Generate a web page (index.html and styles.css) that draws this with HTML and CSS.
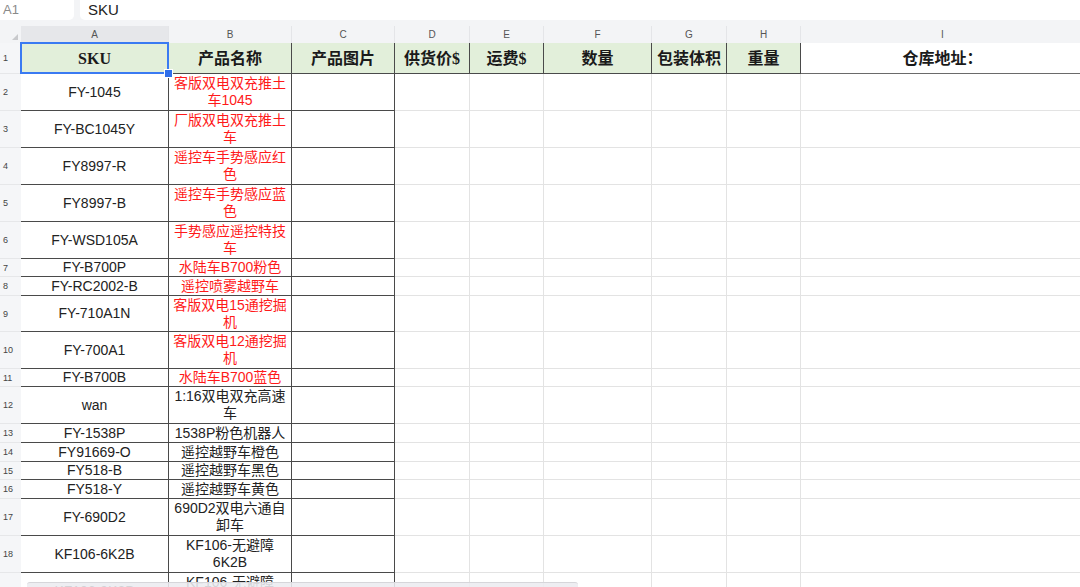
FILE: index.html
```html
<!DOCTYPE html>
<html lang="zh">
<head>
<meta charset="utf-8">
<title>Sheet</title>
<link rel="stylesheet" href="styles.css">
</head>
<body>
<div class="app">
  <div class="fbar">
    <div class="namebox">A1</div>
    <div class="formula">SKU</div>
  </div>
  <div class="sheet">
    <div class="corner"></div>
    <div class="ch sel-ch">A</div><div class="ch">B</div><div class="ch">C</div><div class="ch">D</div><div class="ch">E</div><div class="ch">F</div><div class="ch">G</div><div class="ch">H</div><div class="ch">I</div>

    <div class="rh">1</div>
    <div class="cell hd dk sel">SKU</div><div class="cell hd dk">产品名称</div><div class="cell hd dk">产品图片</div><div class="cell hd dk">供货价$</div><div class="cell hd dk">运费$</div><div class="cell hd dk">数量</div><div class="cell hd dk">包装体积</div><div class="cell hd dk">重量</div><div class="cell hd hd-i">仓库地址：</div>

    <div class="rh">2</div>
    <div class="cell dk">FY-1045</div><div class="cell dk red">客版双电双充推土<br>车1045</div><div class="cell dk"></div><div class="cell"></div><div class="cell"></div><div class="cell"></div><div class="cell"></div><div class="cell"></div><div class="cell"></div>

    <div class="rh">3</div>
    <div class="cell dk">FY-BC1045Y</div><div class="cell dk red">厂版双电双充推土<br>车</div><div class="cell dk"></div><div class="cell"></div><div class="cell"></div><div class="cell"></div><div class="cell"></div><div class="cell"></div><div class="cell"></div>

    <div class="rh">4</div>
    <div class="cell dk">FY8997-R</div><div class="cell dk red">遥控车手势感应红<br>色</div><div class="cell dk"></div><div class="cell"></div><div class="cell"></div><div class="cell"></div><div class="cell"></div><div class="cell"></div><div class="cell"></div>

    <div class="rh">5</div>
    <div class="cell dk">FY8997-B</div><div class="cell dk red">遥控车手势感应蓝<br>色</div><div class="cell dk"></div><div class="cell"></div><div class="cell"></div><div class="cell"></div><div class="cell"></div><div class="cell"></div><div class="cell"></div>

    <div class="rh">6</div>
    <div class="cell dk">FY-WSD105A</div><div class="cell dk red">手势感应遥控特技<br>车</div><div class="cell dk"></div><div class="cell"></div><div class="cell"></div><div class="cell"></div><div class="cell"></div><div class="cell"></div><div class="cell"></div>

    <div class="rh">7</div>
    <div class="cell dk">FY-B700P</div><div class="cell dk red">水陆车B700粉色</div><div class="cell dk"></div><div class="cell"></div><div class="cell"></div><div class="cell"></div><div class="cell"></div><div class="cell"></div><div class="cell"></div>

    <div class="rh">8</div>
    <div class="cell dk">FY-RC2002-B</div><div class="cell dk red">遥控喷雾越野车</div><div class="cell dk"></div><div class="cell"></div><div class="cell"></div><div class="cell"></div><div class="cell"></div><div class="cell"></div><div class="cell"></div>

    <div class="rh">9</div>
    <div class="cell dk">FY-710A1N</div><div class="cell dk red">客版双电15通挖掘<br>机</div><div class="cell dk"></div><div class="cell"></div><div class="cell"></div><div class="cell"></div><div class="cell"></div><div class="cell"></div><div class="cell"></div>

    <div class="rh">10</div>
    <div class="cell dk">FY-700A1</div><div class="cell dk red">客版双电12通挖掘<br>机</div><div class="cell dk"></div><div class="cell"></div><div class="cell"></div><div class="cell"></div><div class="cell"></div><div class="cell"></div><div class="cell"></div>

    <div class="rh">11</div>
    <div class="cell dk">FY-B700B</div><div class="cell dk red">水陆车B700蓝色</div><div class="cell dk"></div><div class="cell"></div><div class="cell"></div><div class="cell"></div><div class="cell"></div><div class="cell"></div><div class="cell"></div>

    <div class="rh">12</div>
    <div class="cell dk">wan</div><div class="cell dk">1:16双电双充高速<br>车</div><div class="cell dk"></div><div class="cell"></div><div class="cell"></div><div class="cell"></div><div class="cell"></div><div class="cell"></div><div class="cell"></div>

    <div class="rh">13</div>
    <div class="cell dk">FY-1538P</div><div class="cell dk">1538P粉色机器人</div><div class="cell dk"></div><div class="cell"></div><div class="cell"></div><div class="cell"></div><div class="cell"></div><div class="cell"></div><div class="cell"></div>

    <div class="rh">14</div>
    <div class="cell dk">FY91669-O</div><div class="cell dk">遥控越野车橙色</div><div class="cell dk"></div><div class="cell"></div><div class="cell"></div><div class="cell"></div><div class="cell"></div><div class="cell"></div><div class="cell"></div>

    <div class="rh">15</div>
    <div class="cell dk">FY518-B</div><div class="cell dk">遥控越野车黑色</div><div class="cell dk"></div><div class="cell"></div><div class="cell"></div><div class="cell"></div><div class="cell"></div><div class="cell"></div><div class="cell"></div>

    <div class="rh">16</div>
    <div class="cell dk">FY518-Y</div><div class="cell dk">遥控越野车黄色</div><div class="cell dk"></div><div class="cell"></div><div class="cell"></div><div class="cell"></div><div class="cell"></div><div class="cell"></div><div class="cell"></div>

    <div class="rh">17</div>
    <div class="cell dk">FY-690D2</div><div class="cell dk">690D2双电六通自<br>卸车</div><div class="cell dk"></div><div class="cell"></div><div class="cell"></div><div class="cell"></div><div class="cell"></div><div class="cell"></div><div class="cell"></div>

    <div class="rh">18</div>
    <div class="cell dk">KF106-6K2B</div><div class="cell dk">KF106-无避障<br>6K2B</div><div class="cell dk"></div><div class="cell"></div><div class="cell"></div><div class="cell"></div><div class="cell"></div><div class="cell"></div><div class="cell"></div>

    <div class="rh">19</div>
    <div class="cell dk">KF106-9K2B</div><div class="cell dk">KF106-无避障<br>9K2B</div><div class="cell dk"></div><div class="cell"></div><div class="cell"></div><div class="cell"></div><div class="cell"></div><div class="cell"></div><div class="cell"></div>
  </div>
  <div class="hscroll"></div>
</div>
</body>
</html>
```

FILE: styles.css
```css
* { box-sizing: border-box; }
html, body {
  margin: 0;
  padding: 0;
  width: 1080px;
  height: 587px;
  overflow: hidden;
  background: #ffffff;
}
.app {
  position: relative;
  width: 1080px;
  height: 587px;
  overflow: hidden;
  font-family: "Liberation Sans", "Noto Sans CJK SC", sans-serif;
  color: #222;
}
.fbar {
  display: flex;
  gap: 6px;
  height: 26px;
  padding-bottom: 6px;
  background: #f3f4f6;
}
.namebox {
  width: 74px;
  background: #fff;
  border-radius: 0 0 5px 0;
  font-size: 13px;
  color: #8a8a8a;
  line-height: 20px;
  padding-left: 3px;
}
.formula {
  flex: 1;
  background: #fff;
  border-radius: 0 0 0 5px;
  font-size: 15px;
  color: #222;
  line-height: 19px;
  padding-left: 8px;
}
.sheet {
  display: grid;
  grid-template-columns: 21px 148px 123px 103px 75px 74px 108px 75px 74px 284px;
  grid-template-rows: 17px 31px 37px 37px 37px 37px 37px 18px 19px 36px 37px 18px 37px 19px 19px 18px 19px 37px 37px 37px;
  width: 1105px;
}
.corner {
  position: relative;
  background: #f3f4f6;
}
.corner::after {
  content: "";
  position: absolute;
  right: 3px;
  bottom: 3px;
  width: 0;
  height: 0;
  border-left: 6px solid transparent;
  border-bottom: 6px solid #c8c9cc;
}
.ch {
  background: #f3f4f6;
  border-right: 1px solid #e4e5e8;
  font-size: 10px;
  color: #555;
  display: flex;
  align-items: center;
  justify-content: center;
}
.sel-ch {
  background: #e6e7ea;
}
.rh {
  background: #f5f6f8;
  border-bottom: 1px solid #e6e7e9;
  font-size: 9px;
  color: #444;
  display: flex;
  align-items: center;
  padding-left: 3px;
}
.cell {
  border-right: 1px solid #e3e3e3;
  border-bottom: 1px solid #e3e3e3;
  display: flex;
  align-items: center;
  justify-content: center;
  text-align: center;
  white-space: nowrap;
  font-size: 14px;
  line-height: 17px;
  overflow: hidden;
}
.cell.dk {
  border-right-color: #4a4a4a;
  border-bottom-color: #4a4a4a;
}
.red { color: #ff1a1a; }
.hd {
  background: #e2efda;
  font-family: "Liberation Serif", "Noto Sans CJK SC", serif;
  font-weight: bold;
  font-size: 16px;
  color: #1a1a1a;
}
.hd-i {
  background: #ffffff;
  border-bottom-color: #6a6a6a;
}
.sel {
  position: relative;
  overflow: visible;
}
.sel::after {
  content: "";
  position: absolute;
  left: -1px;
  top: -1px;
  right: -1px;
  bottom: -1px;
  border: 2px solid #3a7af2;
  pointer-events: none;
}
.sel::before {
  content: "";
  position: absolute;
  right: -5px;
  bottom: -5px;
  width: 7px;
  height: 7px;
  background: #2f6fea;
  border: 1px solid #ffffff;
  z-index: 2;
}
.hscroll {
  position: absolute;
  left: 27px;
  top: 582px;
  width: 551px;
  height: 8px;
  background: rgba(236, 236, 240, 0.88);
  border-top: 1px solid #d6d6da;
  border-radius: 3px 3px 0 0;
}
```
